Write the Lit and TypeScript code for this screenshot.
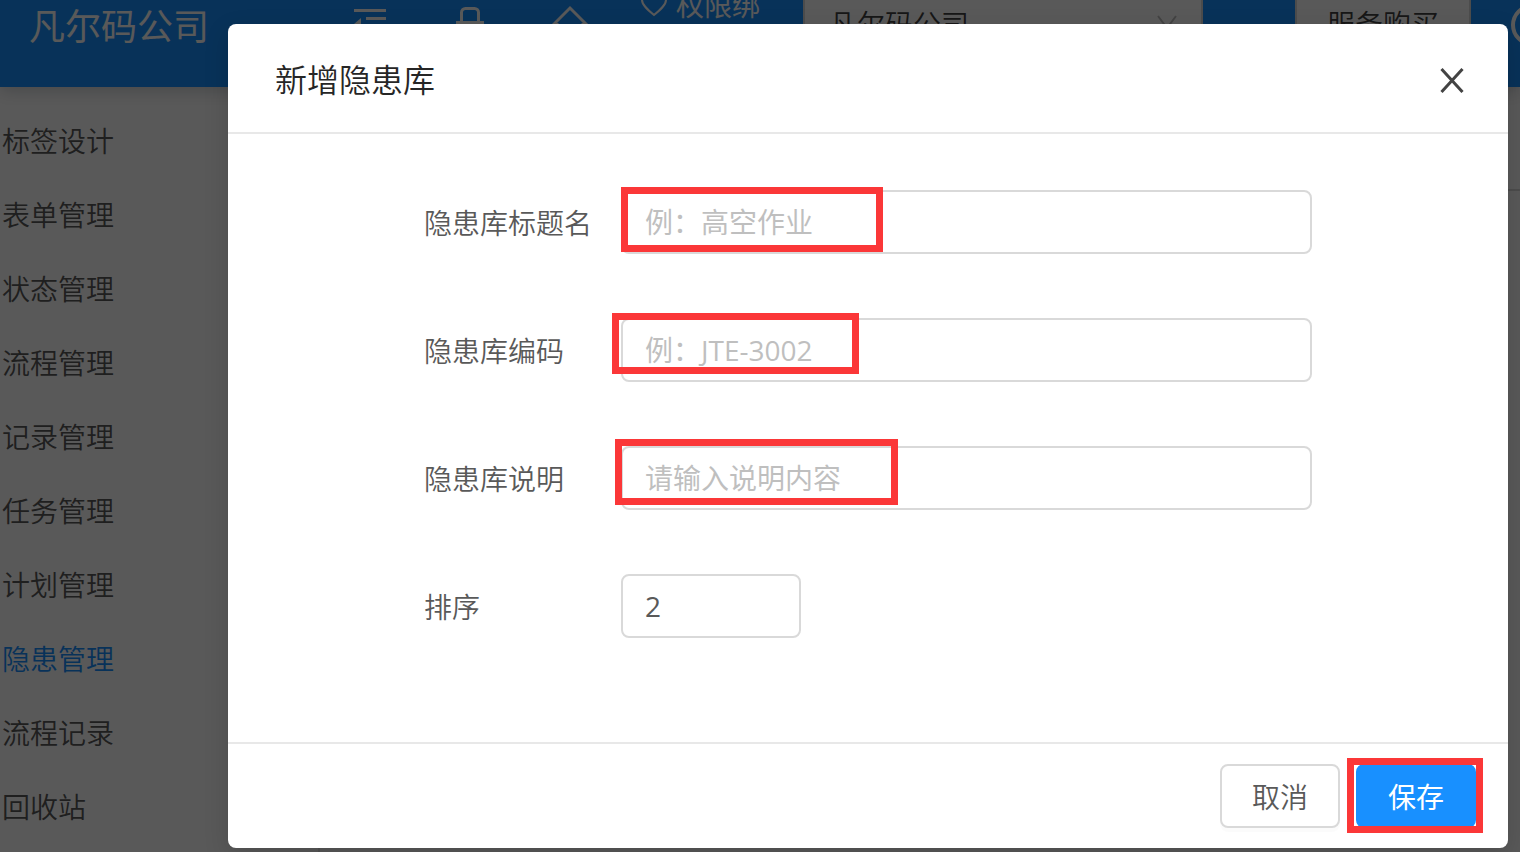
import { LitElement, html, css, svg } from "lit";
import { customElement, state } from "lit/decorators.js";

const MENU = ["标签设计", "表单管理", "状态管理", "流程管理", "记录管理", "任务管理", "计划管理", "隐患管理", "流程记录", "回收站"];
const FIELDS = [
  { id: "title", label: "隐患库标题名", placeholder: "例：高空作业" },
  { id: "code", label: "隐患库编码", placeholder: "例：JTE-3002" },
  { id: "desc", label: "隐患库说明", placeholder: "请输入说明内容" },
];

const icon = (name: string, size: number, body: unknown) => html`
  <svg class="icon" width=${size} height=${size} viewBox="0 0 ${size} ${size}" role="img" aria-label=${name}>${body}</svg>`;

@customElement("app-root")
export class AppRoot extends LitElement {
  @state() private active = "隐患管理";

  static styles = css`
    :host {
      display: block;
      position: relative;
      height: 100vh;
      overflow: hidden;
      background: #fff;
      color: #595959;
      font-family: "Open Sans", "Noto Sans CJK SC", sans-serif;
      font-size: 28px;
      line-height: 40px;
      font-weight: 350;
    }
    * { box-sizing: border-box; }
    button, input, select { font: inherit; color: inherit; }
    .page { margin-top: -41px; }
    .header {
      position: relative;
      height: 128px;
      display: flex;
      align-items: center;
      background: #1890ff;
      color: #fff;
      box-shadow: 0 4px 16px rgba(0, 21, 41, 0.2);
      white-space: nowrap;
    }
    .brand { flex: none; width: 318px; padding: 8px 0 0 29px; font-size: 36px; font-weight: 400; }
    .tools { display: flex; align-items: center; flex: 1; }
    .tools > * { flex: none; }
    .tool { width: 100px; height: 44px; padding: 0 0 0 32px; border: 0; background: none; }
    .icon { display: block; flex: none; fill: none; stroke: currentColor; }
    .bind { display: flex; align-items: center; gap: 8px; width: 185px; padding: 0 0 36px 22px; font-weight: 400; }
    .company {
      width: 400px;
      height: 64px;
      display: flex;
      align-items: center;
      justify-content: space-between;
      border: 2px solid #d9d9d9;
      background: #fff;
      color: #434343;
      padding: 2px 22px 0 24px;
    }
    .company select { appearance: none; border: 0; padding: 0; background: none; flex: 1; }
    .arrow { color: #bfbfbf; }
    .buy {
      width: 176px;
      height: 64px;
      margin-left: 92px;
      border: 2px solid #d9d9d9;
      background: #fff;
      color: #434343;
      padding: 2px 0 0;
    }
    .help { margin-left: 39px; }
    .content { display: flex; }
    .side { width: 318px; padding: 17px 0; }
    .side a { display: block; height: 74px; line-height: 74px; padding-left: 2px; color: #595959; text-decoration: none; }
    .side a.on { color: #1890ff; }
    .panel { flex: 1; border-left: 2px solid #e8e8e8; }
    .bar { height: 104px; border-bottom: 2px solid #d9d9d9; }
    .mask {
      position: absolute;
      inset: 0;
      display: flex;
      justify-content: flex-end;
      align-items: flex-start;
      padding: 24px 12px 4px 228px;
      background: rgba(0, 0, 0, 0.65);
    }
    .modal {
      flex: 1;
      background: #fff;
      border-radius: 8px;
      box-shadow: 0 8px 24px rgba(0, 0, 0, 0.15);
    }
    .head {
      height: 110px;
      display: flex;
      align-items: center;
      justify-content: space-between;
      padding: 4px 43px 0 47px;
      border-bottom: 2px solid #e8e8e8;
      color: #262626;
    }
    .head h2 { margin: 0; font-size: 32px; font-weight: 350; line-height: 44px; }
    .close { border: 0; background: none; padding: 0; color: #434343; }
    form { height: 608px; padding: 56px 196px 0; display: grid; grid-auto-rows: 64px; row-gap: 64px; }
    .row { display: grid; grid-template-columns: 197px 1fr; align-items: center; }
    .row label { padding-top: 2px; }
    .field { position: relative; display: flex; }
    .row input {
      width: 100%;
      height: 64px;
      padding: 0 22px;
      border: 2px solid #d9d9d9;
      border-radius: 8px;
      background: #fff;
      outline: 0;
      font-weight: 400;
    }
    .row input.short { width: 180px; }
    input::placeholder { color: #bfbfbf; opacity: 1; }
    .foot {
      height: 106px;
      display: flex;
      align-items: center;
      justify-content: flex-end;
      gap: 16px;
      padding: 0 32px;
      border-top: 2px solid #e8e8e8;
    }
    .btn {
      width: 120px;
      height: 64px;
      border: 2px solid #d9d9d9;
      border-radius: 8px;
      background: #fff;
      padding: 2px 0 0;
      box-shadow: 0 4px 0 rgba(0, 0, 0, 0.016);
    }
    .primary { background: #1890ff; border-color: #1890ff; color: #fff; font-weight: 400; }
    .save { position: relative; display: flex; }
    .mark { position: absolute; border: 7px solid #fb3738; pointer-events: none; }
    .mark-title { left: 0; top: -3px; width: 262px; height: 65px; }
    .mark-code { left: -9px; top: -5px; width: 247px; height: 61px; }
    .mark-desc { left: -6px; top: -7px; width: 283px; height: 66px; }
    .mark-save { left: -9px; top: -6px; width: 136px; height: 75px; }
  `;

  render() {
    return html`
      <div class="page">
        <header class="header">
          <div class="brand">凡尔码公司</div>
          <div class="tools">
            <button class="tool" aria-label="收起菜单">${icon("收起", 44, svg`<g stroke-width="3"><path d="M4 9.500H36M16 17.500H36M16 25.500H36M4 33.500H36"/><path d="M11 17V29L4 23Z" fill="currentColor" stroke="none"/></g>`)}</button>
            <button class="tool" aria-label="锁定">${icon("锁定", 44, svg`<path d="M11.500 21V11.500a4 4 0 0 1 4-4h9a4 4 0 0 1 4 4V21M7.500 21.500H32.500V41H7.500Z" stroke-width="3"/>`)}</button>
            <button class="tool" aria-label="主页">${icon("主页", 44, svg`<path d="M1 26 20 7 39 26M7 22V40H33V22" stroke-width="3"/>`)}</button>
            <span class="bind">${icon("收藏", 28, svg`<path d="M14 24C8 19 2 14 2 9a6 6 0 0 1 12-2 6 6 0 0 1 12 2c0 5-6 10-12 15Z" stroke-width="2"/>`)}权限绑</span>
            <div class="company">
              <select aria-label="公司"><option>凡尔码公司</option></select>
              <svg class="icon arrow" width="24" height="24" viewBox="0 0 24 24"><path d="M3 4 12 16 21 4" stroke-width="2"/></svg>
            </div>
            <button class="buy">服务购买</button>
            <svg class="icon help" width="44" height="44" viewBox="0 0 44 44"><circle cx="22" cy="24" r="19" stroke-width="4"/><path d="M22 14V27M22 30V34" stroke-width="3"/></svg>
          </div>
        </header>
        <div class="content">
          <nav class="side">
            ${MENU.map((m) => html`<a href="#" class=${m === this.active ? "on" : ""} @click=${() => (this.active = m)}>${m}</a>`)}
          </nav>
          <div class="panel"><div class="bar"></div></div>
        </div>
      </div>
      <div class="mask">
        <section class="modal" role="dialog" aria-modal="true" aria-labelledby="dialog-title">
          <header class="head">
            <h2 id="dialog-title">新增隐患库</h2>
            <button class="close" aria-label="关闭">
              <svg class="icon" width="26" height="26" viewBox="0 0 26 26"><path d="M2.500 2 23.500 25M23.500 2 2.500 25" stroke-width="3"/></svg>
            </button>
          </header>
          <form>
            ${FIELDS.map((f) => html`
              <div class="row">
                <label for=${f.id}>${f.label}</label>
                <div class="field"><input id=${f.id} type="text" placeholder=${f.placeholder} /><span class="mark mark-${f.id}"></span></div>
              </div>`)}
            <div class="row">
              <label for="order">排序</label>
              <div class="field"><input id="order" class="short" type="text" .value=${"2"} /></div>
            </div>
          </form>
          <footer class="foot">
            <button class="btn">取消</button>
            <div class="save"><button class="btn primary">保存</button><span class="mark mark-save"></span></div>
          </footer>
        </section>
      </div>`;
  }
}
